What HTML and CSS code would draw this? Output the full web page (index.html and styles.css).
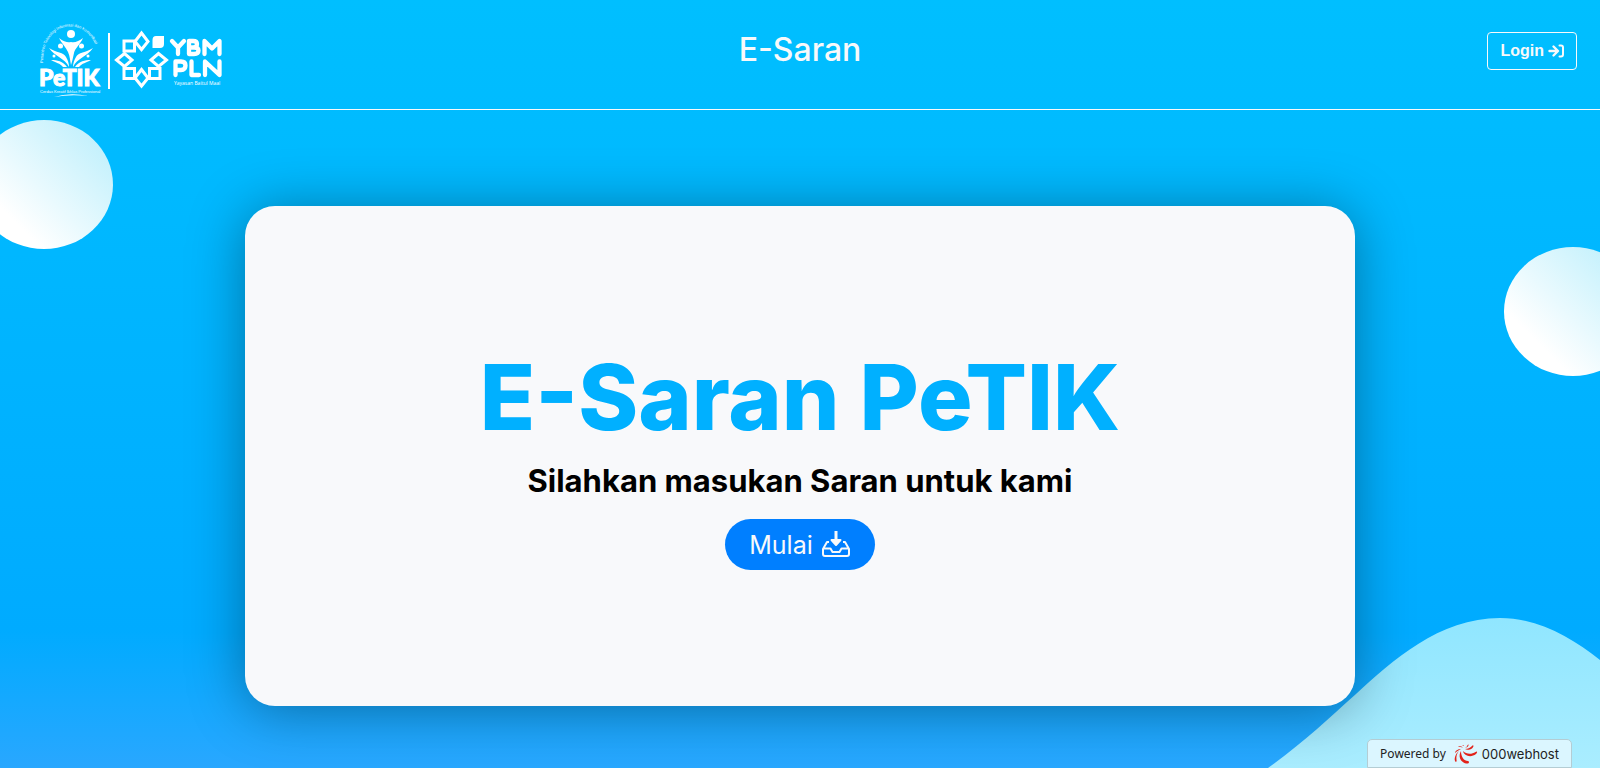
FILE: index.html
```html
<!DOCTYPE html>
<html lang="id">
<head>
  <meta charset="utf-8">
  <meta name="viewport" content="width=device-width, initial-scale=1">
  <title>E-Saran PeTIK</title>
  <link rel="stylesheet" href="styles.css">
</head>
<body>
  <span class="bubble bubble-left"></span>
  <span class="bubble bubble-right"></span>
  <svg class="wave" viewBox="0 0 332 150" aria-hidden="true">
    <defs>
      <linearGradient id="wave-fill" x1="0" y1="0" x2="0" y2="1">
        <stop offset="0" stop-color="#90e6ff"/>
        <stop offset="1" stop-color="#aaedff"/>
      </linearGradient>
    </defs>
    <path fill="url(#wave-fill)" d="M0 150C35 125 59 102 88 76C124 43 171 0 232 0C270 0 304 20 332 42V150Z"/>
  </svg>

  <header class="header">
    <a class="brand" href="#" aria-label="PeTIK YBM PLN">
      <svg class="brand-logo" width="190" height="80" viewBox="36 20 190 80" fill="#fff">
        <path id="arc" d="M43 64C41 14 99 14 99 64" fill="none"/>
        <text class="logo-arc"><textPath href="#arc" startOffset="1">Pesantren Teknologi Informasi dan Komunikasi</textPath></text>
        <circle cx="71" cy="34" r="4"/>
        <circle cx="60.500" cy="46" r="2.500"/>
        <circle cx="81.500" cy="46" r="2.500"/>
        <circle cx="54" cy="56" r="1.500"/>
        <circle cx="88" cy="56" r="1.500"/>
        <path d="M59 38C64 42 68 43 71 42C75 43 79 41 83 38C80 45 75 48 74 53C73 58 72 62 71 65C70 61 70 56 68 52C66 47 61 43 59 38Z"/>
        <path d="M49 48C56 53 64 52 66 57C68 60 69 64 69 67C65 58 55 57 49 48ZM93 48C86 53 78 52 76 57C74 60 73 64 73 67C77 58 87 57 93 48Z"/>
        <path d="M51 60C57 60 63 61 67 67H63C60 63 56 63 51 60ZM91 60C85 60 79 61 75 67H79C82 63 86 63 91 60Z"/>
        <text class="logo-petik" x="39" y="86">PeTIK</text>
        <text class="logo-tag" x="40" y="93">Cerdas Kreatif Ikhlas Professional</text>
        <path d="M54 97Q70 92 88 96Q70 94 54 97Z"/>
        <path d="M108 33h2v56h-2z"/>
        <g fill="none" stroke="#fff" stroke-width="3">
          <path d="M141.500 33L148 41.500L141.500 49.500L135 41.500ZM141.500 69.500L148 78L141.500 86L135 78ZM116.500 60L124.500 53.500L132 60L124.500 66.500ZM151 60L158.500 53.500L166.500 60L158.500 66.500Z"/>
          <path d="M124 41H134.500V51H124ZM124 68.500H134.500V78.500H124ZM149.500 68.500H160V78.500H149.500Z"/>
        </g>
        <path d="M156 36H164V44Q164 48 160 48H152.500V40Q152.500 36 156 36Z"/>
        <g fill="none" stroke="#fff" stroke-width="4.300" stroke-linecap="round" stroke-linejoin="round">
          <path d="M172 41L178 47.500L184 41M178 47.500V54M189 41V54H194Q198.500 54 198.500 50.500Q198.500 47.500 194 47.500H189M189 41H193Q197 41 197 44Q197 47.500 193 47.500M204.500 54V41L212 48.500L219.500 41V54"/>
          <path d="M175.500 75V61.500H181Q185.500 61.500 185.500 65.500Q185.500 70 181 70H175.500M191.500 61.500V75H199M205 75V61.500L219.500 75V61.500"/>
        </g>
        <text class="logo-ybm" x="174" y="85">Yayasan Baitul Maal</text>
      </svg>
    </a>
    <h1 class="header-title">E-Saran</h1>
    <button class="login" type="button">Login
      <svg width="16" height="16" viewBox="0 0 16 16" fill="none" stroke="#f8f9fa" stroke-width="2.400" stroke-linecap="round" stroke-linejoin="round" aria-hidden="true">
        <path d="M1.500 8H9.500M5.500 3.500L10 8L5.500 12.500"/>
        <path d="M11.500 2.500H13Q15 2.500 15 4.500V11.500Q15 13.500 13 13.500H11.500" stroke-width="2"/>
      </svg>
    </button>
  </header>

  <main class="page">
    <section class="card">
      <h2 class="card-title">E-Saran PeTIK</h2>
      <p class="card-text">Silahkan masukan Saran untuk kami</p>
      <a class="start" href="#">Mulai
        <svg width="30" height="28" viewBox="0 0 30 28" fill="none" stroke="#f8f9fa" stroke-width="2" stroke-linejoin="round" aria-hidden="true">
          <path d="M8 11H6L2 18V23Q2 25 4 25H26Q28 25 28 23V18L24 11H22M2 17.500H9.500L11.500 21H18.500L20.500 17.500H28"/>
          <path d="M15 0V10" stroke-width="3"/>
          <path d="M10.500 9H19.500L15 14Z" fill="#f8f9fa"/>
        </svg>
      </a>
    </section>
  </main>

  <a class="badge" href="#">
    <span>Powered by</span>
    <svg class="badge-logo" width="24" height="20" viewBox="0 0 24 20" fill="#e2231a" aria-hidden="true">
      <path d="M7 7C4 12 6 18 12 19.500C15 20 16 18 14 17C10 17 7 13 7 7Z"/>
      <path d="M9 7C10 12 17 14 22 10C24 8 23 6.500 21.500 8C17 11 12 10 9 7Z"/>
      <path d="M11 5C14 7 19 5 19.500 2C19.500 1 18.500 1 18 2C16 4 14 5 11 5ZM11 3.500C13 4 15 2 14.500.500C13.500 0 13.500 3 11 3.500Z"/>
      <path d="M5 7C2 9 0 14 1 17C2 19 3 17 2.500 16C2 12 3 9 5 7ZM7 5C4 5 1 7 1 9C3 7 5 6 7 5ZM9 3.500C7 2 5 2 4 3C6 3 7 3 9 3.500ZM10 2L9 1L8.500 2Z"/>
    </svg>
    <span class="badge-name">000webhost</span>
  </a>
</body>
</html>
```
FILE: styles.css
```css
* {
  box-sizing: border-box;
}

body {
  position: relative;
  display: flex;
  flex-direction: column;
  min-height: 100vh;
  margin: 0;
  overflow-x: hidden;
  background: linear-gradient(180deg, #00bfff 0%, #00abff 82%, #29a7ff 100%);
  font-family: Inter, "Liberation Sans", sans-serif;
}

.bubble {
  position: absolute;
  width: 138px;
  height: 129px;
  border-radius: 50%;
  background: linear-gradient(45deg, #fff 25%, #c0f0fc 90%);
}

.bubble-left {
  top: 120px;
  left: -25px;
}

.bubble-right {
  top: 247px;
  right: -42px;
  clip-path: inset(0 42px 0 0);
}

.wave {
  position: absolute;
  right: 0;
  bottom: 0;
  width: 332px;
  height: 150px;
}

.header {
  position: relative;
  display: grid;
  grid-template-columns: 1fr auto 1fr;
  align-items: start;
  height: 110px;
  padding: 20px 23px 0;
  border-bottom: 1px solid #f8f9fa;
}

.brand {
  justify-self: start;
  margin-left: 13px;
}

.brand-logo {
  display: block;
}

.logo-arc {
  font: 4px "Liberation Sans", sans-serif;
}

.logo-petik {
  font: 900 23px Lato, sans-serif;
  stroke: #fff;
  stroke-width: 1px;
}

.logo-tag {
  font: 4px "Liberation Sans", sans-serif;
}

.logo-ybm {
  font: 5px "Open Sans", sans-serif;
}

.header-title {
  margin: 12px 0 0;
  color: #f8f9fa;
  font-size: 32px;
  font-weight: 500;
  line-height: 36px;
}

.login {
  display: flex;
  align-items: center;
  justify-self: end;
  gap: 4px;
  height: 38px;
  margin-top: 12px;
  padding: 0 12px;
  border: 1px solid #f8f9fa;
  border-radius: 4px;
  background: transparent;
  color: #f8f9fa;
  font: bold 16px "Liberation Sans", sans-serif;
}

.page {
  position: relative;
  flex: 1;
  padding: 96px 16px 62px;
}

.card {
  display: flex;
  flex-direction: column;
  align-items: center;
  max-width: 1110px;
  min-height: 500px;
  margin: 0 auto;
  padding: 137px 24px 0;
  border-radius: 30px;
  background: #f8f9fb;
  box-shadow: 0 4px 56px rgba(0, 0, 0, 0.37);
  text-align: center;
}

.card-title {
  margin: 0;
  color: #00b0ff;
  font-size: 91px;
  font-weight: 800;
  line-height: 108px;
}

.card-text {
  margin: 10px 0 18px;
  color: #000;
  font-size: 31px;
  font-weight: 700;
  line-height: 40px;
}

.start {
  display: flex;
  align-items: center;
  gap: 8px;
  height: 51px;
  padding: 0 24px;
  border-radius: 26px;
  background: #007fff;
  color: #f8f9fa;
  font-size: 25px;
  text-decoration: none;
}

.badge {
  position: absolute;
  right: 28px;
  bottom: 0;
  display: flex;
  align-items: center;
  height: 29px;
  padding: 0 12px;
  border: 1px solid #b4cdd4;
  border-radius: 5px 5px 0 0;
  background: #dbf6ff;
  color: #222;
  font: 12px "Noto Sans", sans-serif;
  text-decoration: none;
}

.badge-logo {
  margin: 0 4px 0 8px;
}

.badge-name {
  font: 13px Inter, sans-serif;
}
```
